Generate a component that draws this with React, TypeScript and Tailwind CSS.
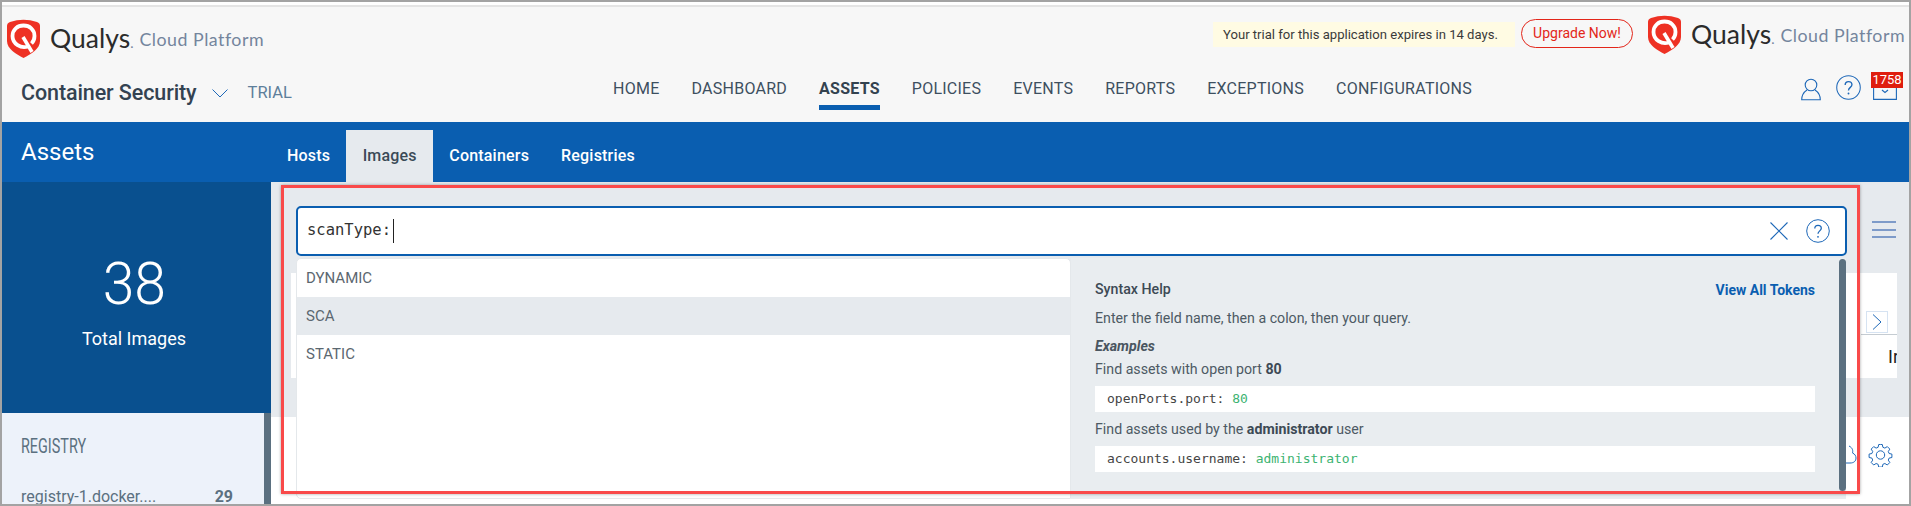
import React from "react";

const roboto = "font-['Roboto',sans-serif]";

function Logo() {
  return (
    <div className="flex items-center whitespace-nowrap">
      <svg width="33" height="39" viewBox="0 0 33 39" className="shrink-0">
        <path d="M3 3 Q16.5 -1.5 30 3 Q33 4 33 7 V22 C33 30 24 35 16.5 39 C9 35 0 30 0 22 V7 Q0 4 3 3Z" fill="#ee3124" />
        <path d="M21 27.500 C14 30 5.500 25 5.500 17 C5.500 10.500 10.500 6.500 16.500 6.500 C22.500 6.500 27.500 10.500 27.500 17 C27.500 20 26.500 22.500 24.500 24.500" fill="none" stroke="#fff" strokeWidth="3.800" />
        <path d="M16 18 L25 33" stroke="#fff" strokeWidth="3.600" />
      </svg>
      <span className="ml-[10px] font-['Lato',sans-serif] text-[26.500px] leading-none text-[#2b2b2b]">Qualys<span className="text-[#74859d] text-[14px]">.</span></span>
      <span className="ml-[6px] font-['Lato',sans-serif] text-[17.800px] leading-none text-[#74859d] tracking-[0.5px] mt-[3px]">Cloud Platform</span>
    </div>
  );
}

const navItems = ["HOME", "DASHBOARD", "ASSETS", "POLICIES", "EVENTS", "REPORTS", "EXCEPTIONS", "CONFIGURATIONS"];

function QMark({ size }: { size: number }) {
  return (
    <svg width={size} height={size} viewBox="0 0 24 24" fill="none" stroke="#1e68b8" strokeWidth="1">
      <circle cx="12" cy="12" r="11.300" />
      <path d="M8.800 9.500 C8.800 7.500 10.300 6.300 12 6.300 C13.800 6.300 15.300 7.500 15.300 9.300 C15.300 11.800 12 12 12 14.800" strokeWidth="1.300" />
      <circle cx="12" cy="17.800" r="0.900" fill="#1e68b8" stroke="none" />
    </svg>
  );
}

export default function App() {
  return (
    <div className={`${roboto} relative w-[1911px] h-[506px] box-border overflow-hidden border-2 border-[#a3a3a3] bg-white flex flex-col`}>
      {/* header */}
      <header className="h-[120px] shrink-0 bg-[#f7f7f7] flex flex-col">
        <div className="h-[3px] bg-white" />
        <div className="h-[2px] bg-[#e4e4e4]" />
        <div className="h-[52px] flex items-center pl-[5px] pr-[2px]">
          <div className="mt-[10px]"><Logo /></div>
          <div className="ml-auto flex items-center mt-[3px]">
            <div className="h-[25px] w-[302px] bg-[#fffbe3] flex items-center pl-[10px] text-[13.100px] text-[#3a3a3a]">Your trial for this application expires in 14 days.</div>
            <div className="ml-[6px] h-[29px] w-[112px] rounded-full border border-[#e3261a] flex items-center justify-center text-[14px] text-[#e3261a] -mt-[2px]">Upgrade Now!</div>
            <div className="ml-[15px] -mt-[1px] flex items-center w-[259px]"><Logo /></div>
          </div>
        </div>
        <div className="flex-1 flex items-start pl-[19px] relative">
          <div className="flex items-center w-[592px] mt-[19px]">
            <span className="text-[21.500px] leading-[30px] font-medium text-[#334251] tracking-[-0.1px]">Container Security</span>
            <svg width="16" height="9" viewBox="0 0 16 9" className="ml-[15px]" fill="none" stroke="#1e68b8" strokeWidth="1"><path d="M0.500 0.500 L8 8 L15.500 0.500" /></svg>
            <span className="ml-[20px] text-[16.500px] text-[#5e7f9b]">TRIAL</span>
          </div>
          <nav className="flex gap-[32px] mt-[19px]">
            {navItems.map((n) => (
              <div key={n} className="flex flex-col">
                <span className={`text-[16px] leading-[22px] tracking-[0.25px] whitespace-nowrap ${n === "ASSETS" ? "font-bold text-[#33424f]" : "text-[#3d4f5f]"}`}>{n}</span>
                {n === "ASSETS" ? <span className="mt-[5px] h-[5px] bg-[#0a5eb0]" /> : null}
              </div>
            ))}
          </nav>
          <div className="ml-auto mr-[12px] mt-[16px] flex items-start gap-[15px]">
            <svg width="20" height="23" viewBox="0 0 20 23" fill="none" stroke="#1e68b8" strokeWidth="1.100" className="mt-[3px] -ml-[1px]">
              <circle cx="10" cy="7" r="5.800" />
              <path d="M6 12 C3 14 0.700 18 0.700 21.800 H19.300 C19.300 18 17 14 14 12" />
            </svg>
            <QMark size={25} />
            <div className="relative w-[24px] h-[25px] -ml-[3px]">
              <svg width="24" height="14" viewBox="0 0 24 14" fill="none" stroke="#1e68b8" strokeWidth="1.100" className="absolute left-0 top-[11px]">
                <path d="M0.600 0 V13.400 H23.400 V0" />
                <path d="M9 4 L12 6.500 L15 4" />
              </svg>
              <span className="absolute -left-[2px] -top-[3px] w-[32px] h-[16px] bg-[#df1d0e] text-white text-[13px] leading-[16px] text-center">1758</span>
            </div>
          </div>
        </div>
      </header>

      {/* blue bar */}
      <div className="h-[60px] shrink-0 bg-[#0a5eb0] flex">
        <div className="w-[269px] pl-[19px] pt-[13px] text-[24px] leading-[34px] text-white">Assets</div>
        <div className="flex items-end h-full text-[16px] font-medium tracking-[0.2px]">
          {["Hosts", "Images", "Containers", "Registries"].map((t) => (
            <div key={t} className={`h-[52px] flex items-center justify-center ${t === "Images" ? "bg-[#e6eaee] text-[#3b4a57] w-[87px]" : "text-white px-[16px]"}`}>{t}</div>
          ))}
        </div>
      </div>

      {/* body */}
      <div className="flex-1 flex min-h-0">
        <aside className="w-[269px] shrink-0 flex flex-col">
          <div className="h-[231px] shrink-0 bg-[#09508f] pr-[5px] flex flex-col items-center text-white">
            <div className="mt-[65px] text-[60px] leading-[74px] font-light scale-x-[0.95]">38</div>
            <div className="mt-[6px] text-[18px] leading-[24px]">Total Images</div>
          </div>
          <div className="flex-1 flex min-h-0">
            <div className="flex-1 bg-[#edf2fa] pl-[19px] pr-[31px] text-[#5b7080]">
              <div className="mt-[23px] h-[20px] text-[20px] leading-[20px] origin-left scale-x-[0.72] whitespace-nowrap">REGISTRY</div>
              <div className="mt-[31px] flex justify-between items-center text-[16px] leading-[20px]">
                <span className="whitespace-nowrap">registry-1.docker....</span>
                <span className="font-bold">29</span>
              </div>
            </div>
            <div className="w-[7px] bg-[#5b7080]" />
          </div>
        </aside>

        <main className="flex-1 flex flex-col min-w-0">
          <div className="h-[235px] shrink-0 bg-[#e6eaee] pt-[91px] pr-[12px] flex flex-col items-end">
            <div className="w-[1606px] h-[105px] bg-white pl-[1570px] flex flex-col">
              <div className="h-[62px] border-b border-[#c5ccd2] flex items-end justify-end pb-[1px] pr-[9px]">
                <div className="w-[22px] h-[22px] border border-[#d6e3f2] flex items-center justify-center">
                  <svg width="10" height="16" viewBox="0 0 10 16" fill="none" stroke="#1e68b8" strokeWidth="1"><path d="M1 0.500 L9 8 L1 15.500" /></svg>
                </div>
              </div>
              <div className="pl-[27px] text-[18px] leading-[43px] text-[#222] whitespace-nowrap overflow-hidden">Ir</div>
            </div>
          </div>
          <div className="flex-1 flex justify-end items-start pt-[26px] pr-[16px]">
            <svg width="25" height="24" viewBox="0 0 24 24" fill="none" stroke="#1e68b8" strokeWidth="1">
              <path d="M12 1.500 h-1.800 l-.6 2.800 -2 .8 -2.400-1.500 -2.500 2.500 1.500 2.400 -.8 2 -2.800 .6 v3.400 l2.800 .6 .8 2 -1.500 2.400 2.500 2.500 2.400-1.500 2 .8 .6 2.800 h3.600 l.6-2.800 2-.8 2.400 1.500 2.500-2.500 -1.500-2.400 .8-2 2.800-.6 v-3.400 l-2.800-.6 -.8-2 1.500-2.400 -2.500-2.500 -2.400 1.500 -2-.8 -.6-2.800 z" />
              <circle cx="12" cy="12" r="4.200" />
            </svg>
          </div>
        </main>
      </div>

      {/* hamburger behind search */}
      <div className="absolute left-[1870px] top-[219px] w-[24px] h-[17px] flex flex-col justify-between">
        <span className="h-[2px] bg-[#7e9bc9]" /><span className="h-[2px] bg-[#7e9bc9]" /><span className="h-[2px] bg-[#7e9bc9]" />
      </div>
      {/* cloud fragment */}
      <svg width="12" height="19" viewBox="0 0 12 19" fill="none" stroke="#1e68b8" strokeWidth="1" className="absolute left-[1843px] top-[443px]">
        <path d="M4 1 C8 3 8 6 7.500 8 C10 9 11 11 11 13 C11 16 9 18 5 18 H0" />
      </svg>

      {/* search overlay */}
      <div className="absolute left-[294px] top-[204px] w-[1551px] h-[50px] box-border border-2 border-[#0a5eb0] rounded-[5px] bg-white flex items-center pl-[9px] pr-[15px]">
        <span className="font-['DejaVu_Sans_Mono',monospace] text-[15.500px] text-[#333] leading-none">scanType:</span>
        <span className="ml-[2px] w-px h-[24px] bg-[#222]" />
        <svg width="18" height="18" viewBox="0 0 18 18" fill="none" stroke="#1e68b8" strokeWidth="1.100" className="ml-auto mr-[18px]"><path d="M0.500 0.500 L17.500 17.500 M17.500 0.500 L0.500 17.500" /></svg>
        <QMark size={24} />
      </div>

      {/* dropdown overlay */}
      <div className="absolute left-[294px] top-[256px] w-[1550px] h-[241px] flex">
        <div className="w-[775px] shrink-0 bg-white border border-[#e4e8eb] rounded-l-[5px] rounded-tr-[5px] text-[15px] text-[#5b6770]">
          <div className="h-[38px] flex items-center pl-[9px]">DYNAMIC</div>
          <div className="h-[38px] flex items-center pl-[9px] bg-[#e6eaee]">SCA</div>
          <div className="h-[38px] flex items-center pl-[9px]">STATIC</div>
        </div>
        <div className="flex-1 bg-[#e9edf0] pl-[24px] pr-[31px] text-[14.200px] text-[#4d5a64] relative">
          <div className="mt-[22px] h-[20px] flex justify-between items-center">
            <span className="font-medium text-[#3d4a55]">Syntax Help</span>
            <span className="font-bold text-[#0a5eb0] text-[14px]">View All Tokens</span>
          </div>
          <div className="mt-[8px] h-[20px] leading-[20px]">Enter the field name, then a colon, then your query.</div>
          <div className="mt-[8px] h-[20px] leading-[20px] italic font-bold text-[#4a5660]">Examples</div>
          <div className="mt-[3px] h-[20px] leading-[20px]">Find assets with open port <span className="font-bold text-[#3d4a55]">80</span></div>
          <div className="mt-[7px] h-[26px] bg-white pl-[12px] flex items-center font-['DejaVu_Sans_Mono',monospace] text-[13px] text-[#444]">openPorts.port:&nbsp;<span className="text-[#3cb371]">80</span></div>
          <div className="mt-[7px] h-[20px] leading-[20px]">Find assets used by the <span className="font-bold text-[#3d4a55]">administrator</span> user</div>
          <div className="mt-[7px] h-[26px] bg-white pl-[12px] flex items-center font-['DejaVu_Sans_Mono',monospace] text-[13px] text-[#444]">accounts.username:&nbsp;<span className="text-[#3cb371]">administrator</span></div>
          <div className="absolute right-0 top-[1px] bottom-[8px] w-[7px] rounded-full bg-[#5b7080]" />
        </div>
      </div>

      {/* highlight rectangle */}
      <div className="absolute left-[279px] top-[183px] w-[1579px] h-[309px] box-border border-[3px] border-[#f94a4a] shadow-[0_0_3px_rgba(0,0,0,0.35)] pointer-events-none" />
    </div>
  );
}
